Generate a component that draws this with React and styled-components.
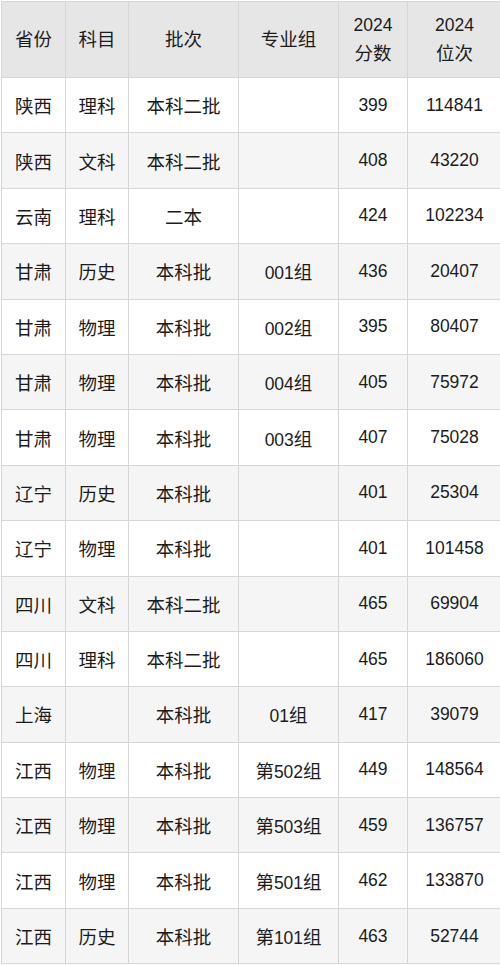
import styled, { createGlobalStyle } from "styled-components";

const GlobalStyle = createGlobalStyle`
  html, body {
    margin: 0;
    padding: 0;
    background: #ffffff;
  }
  body {
    font-family: "Liberation Sans", "Noto Sans CJK SC", sans-serif;
    color: #1c1c1c;
  }
`;

const rows = [
  ["陕西", "理科", "本科二批", "", "399", "114841"],
  ["陕西", "文科", "本科二批", "", "408", "43220"],
  ["云南", "理科", "二本", "", "424", "102234"],
  ["甘肃", "历史", "本科批", "001组", "436", "20407"],
  ["甘肃", "物理", "本科批", "002组", "395", "80407"],
  ["甘肃", "物理", "本科批", "004组", "405", "75972"],
  ["甘肃", "物理", "本科批", "003组", "407", "75028"],
  ["辽宁", "历史", "本科批", "", "401", "25304"],
  ["辽宁", "物理", "本科批", "", "401", "101458"],
  ["四川", "文科", "本科二批", "", "465", "69904"],
  ["四川", "理科", "本科二批", "", "465", "186060"],
  ["上海", "", "本科批", "01组", "417", "39079"],
  ["江西", "物理", "本科批", "第502组", "449", "148564"],
  ["江西", "物理", "本科批", "第503组", "459", "136757"],
  ["江西", "物理", "本科批", "第501组", "462", "133870"],
  ["江西", "历史", "本科批", "第101组", "463", "52744"],
];

const widths = [64, 63, 110, 100, 69, 94];

const Wrapper = styled.div`
  width: 500px;
  height: 965px;
  padding: 1px 1px 0 1px;
  box-sizing: border-box;
`;

const Table = styled.table`
  width: 498px;
  border-collapse: collapse;
  table-layout: fixed;
  font-size: 17.5px;
  border: 1px solid #d6d6d6;
`;

const HeadRow = styled.tr`
  height: 76px;
  background: #e6e6e6;
`;

const Row = styled.tr`
  height: 55.4px;
  background: ${(p) => (p.$alt ? "#f5f5f5" : "#ffffff")};
`;

const Th = styled.th`
  font-weight: normal;
  text-align: center;
  vertical-align: middle;
  border: 1px solid #d6d6d6;
  padding: 0 2px;
  line-height: 27px;
`;

const Td = styled.td`
  text-align: center;
  vertical-align: middle;
  border: 1px solid #d6d6d6;
  padding: 0 2px;
  white-space: nowrap;
`;

const Han = styled.span`
  font-family: "Noto Sans CJK SC", sans-serif;
  font-size: 18.5px;
`;

// split text so the Chinese parts get a slightly larger size than digits
const Text = ({ children }) =>
  (children.match(/\d+|\D+/g) || []).map((part, i) =>
    /\d/.test(part) ? <span key={i}>{part}</span> : <Han key={i}>{part}</Han>
  );

export default function App() {
  return (
    <>
      <GlobalStyle />
      <Wrapper>
        <Table>
          <colgroup>
            {widths.map((w, i) => (
              <col key={i} style={{ width: w }} />
            ))}
          </colgroup>
          <thead>
            <HeadRow>
              <Th><Text>省份</Text></Th>
              <Th><Text>科目</Text></Th>
              <Th><Text>批次</Text></Th>
              <Th><Text>专业组</Text></Th>
              <Th>
                2024
                <br />
                <Text>分数</Text>
              </Th>
              <Th>
                2024
                <br />
                <Text>位次</Text>
              </Th>
            </HeadRow>
          </thead>
          <tbody>
            {rows.map((r, i) => (
              <Row key={i} $alt={i % 2 === 1}>
                {r.map((c, j) => (
                  <Td key={j}>
                    <Text>{c}</Text>
                  </Td>
                ))}
              </Row>
            ))}
          </tbody>
        </Table>
      </Wrapper>
    </>
  );
}
